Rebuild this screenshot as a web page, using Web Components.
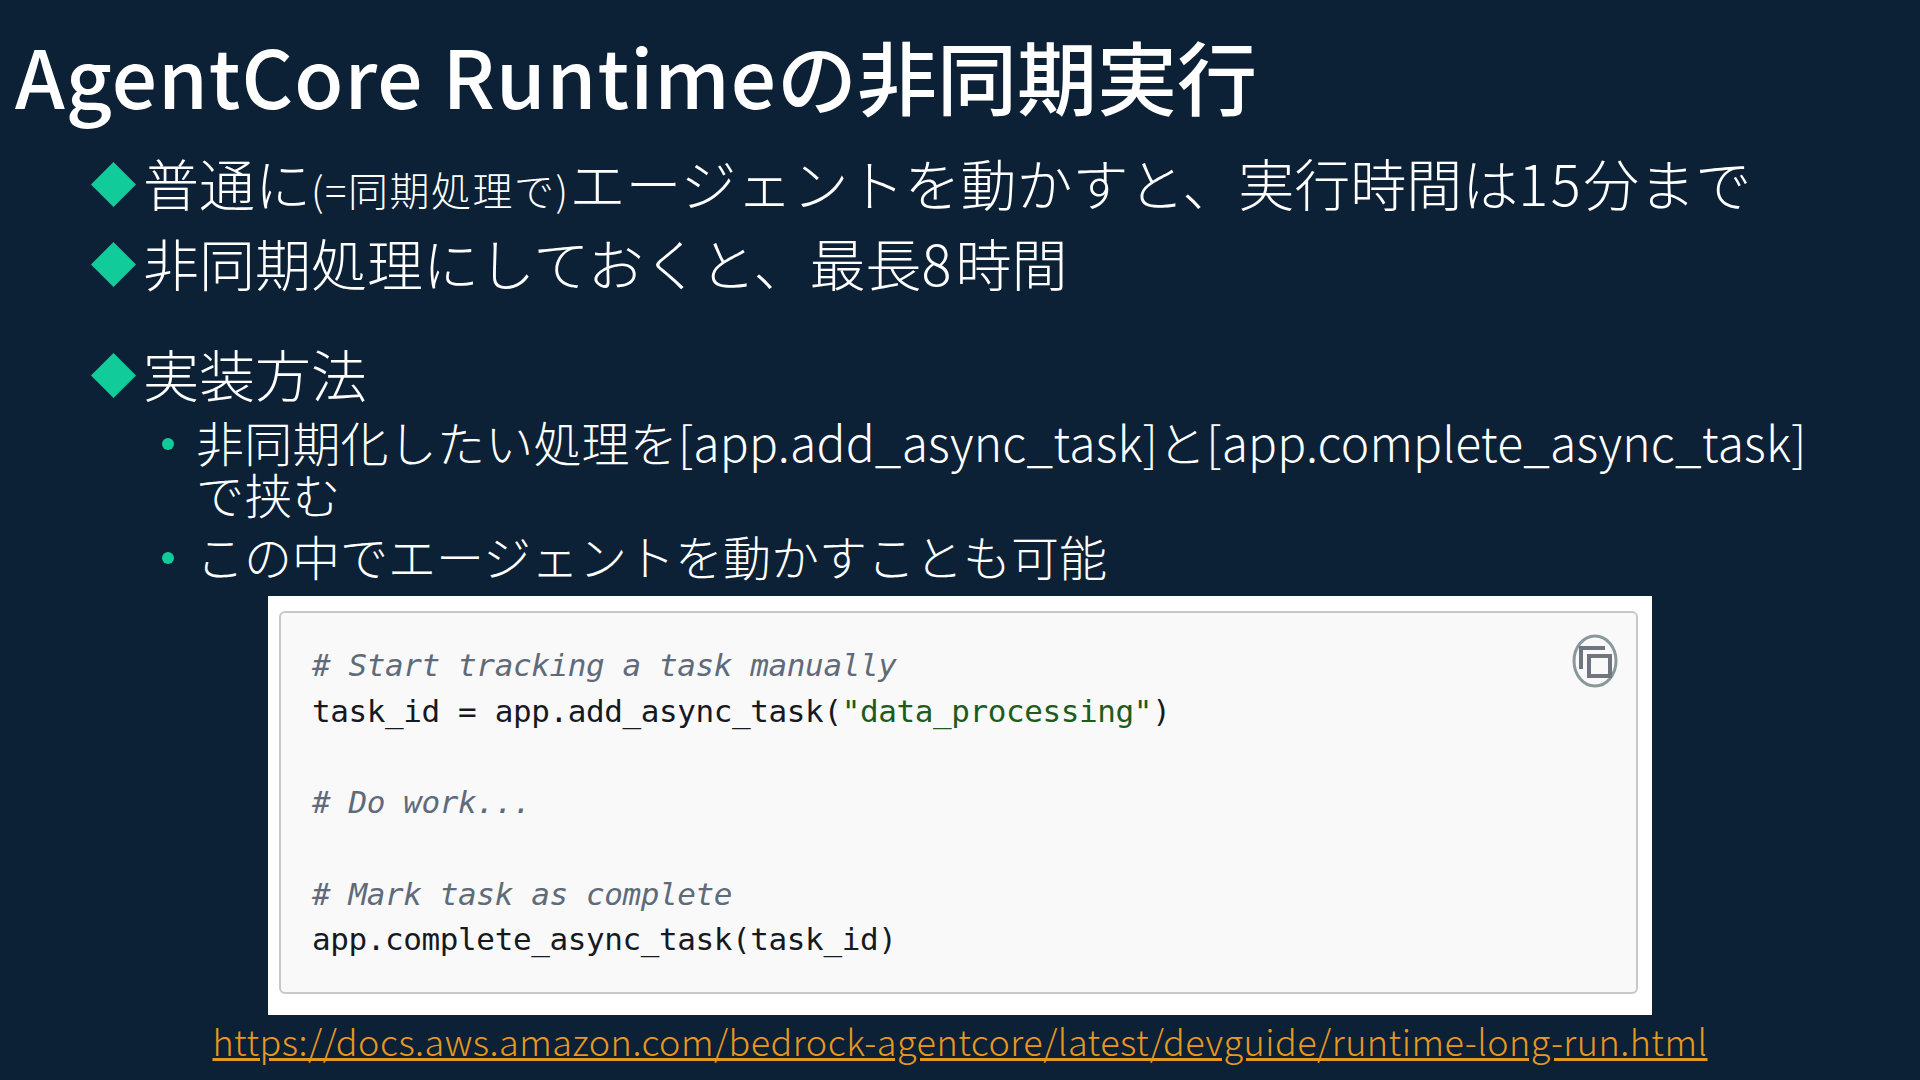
<!DOCTYPE html>
<html lang="ja"><head><meta charset="utf-8"><style>
html,body{margin:0;height:100%;background:#0c2036}
body{width:1920px;height:1080px;overflow:hidden;font-family:"Noto Sans CJK JP","Noto Sans",sans-serif}
</style></head><body>
<slide-page>
  <span slot="title"><span style="letter-spacing:1px">AgentCore Runtime</span>の非同期実行</span>
  <big-item>普通に<span style="font-size:40px;line-height:1;letter-spacing:1.5px">(=同期処理で)</span>エージェントを動かすと、実行時間は<span style="letter-spacing:2.5px">15</span>分まで</big-item>
  <big-item>非同期処理にしておくと、最長<span style="letter-spacing:4px">8</span>時間</big-item>
  <big-item style="margin-top:31px">実装方法</big-item>
  <sub-item style="margin-top:2px;letter-spacing:.2px">非同期化したい処理を[app.add_async_task]と[app.complete_async_task]で挟む</sub-item>
  <sub-item>この中でエージェントを動かすことも可能</sub-item>
  <code-shot style="margin-top:5px"></code-shot>
  <a slot="link">https://docs.aws.amazon.com/bedrock-agentcore/latest/devguide/runtime-long-run.html</a>
</slide-page>
<script>
class SlidePage extends HTMLElement{constructor(){super();this.attachShadow({mode:"open"}).innerHTML=`<style>
:host{display:flex;flex-direction:column;width:1920px;height:1080px;box-sizing:border-box;color:#fff}
h1{margin:0;padding:26px 0 0 15px;font-size:80px;line-height:96px;font-weight:500;white-space:nowrap}
.b{padding:20px 0 0 91px;display:flex;flex-direction:column}
.l{display:block;text-align:center;font-size:36px;line-height:46px;font-weight:300;letter-spacing:.47px;padding-top:2px;color:#e8981f;text-decoration:underline}
</style><h1><slot name="title"></slot></h1><div class="b"><slot></slot></div><div class="l"><slot name="link"></slot></div>`}}
class BigItem extends HTMLElement{constructor(){super();this.attachShadow({mode:"open"}).innerHTML=`<style>
:host{display:flex;font-size:56px;line-height:80px;font-weight:300;white-space:nowrap}
i{width:45px;height:45px;margin:20px 7px 0 0;flex:none;background:#12cb9a;clip-path:polygon(50% 0,100% 50%,50% 100%,0 50%)}
</style><i></i><div><slot></slot></div>`}}
class SubItem extends HTMLElement{constructor(){super();this.attachShadow({mode:"open"}).innerHTML=`<style>
:host{display:flex;font-size:48px;line-height:52px;font-weight:300;padding-left:71px;width:1740px;box-sizing:border-box;margin-bottom:10px}
i{width:12px;height:12px;border-radius:50%;background:#12cb9a;margin:23px 22px 0 0;flex:none}
</style><i></i><div><slot></slot></div>`}}
class CodeShot extends HTMLElement{constructor(){super();this.attachShadow({mode:"open"}).innerHTML=`<style>
:host{display:block;width:1384px;height:419px;margin-left:177px;background:#fff;padding:15px 14px 21px 11px;box-sizing:border-box;color:#16191f}
.c{position:relative;height:100%;box-sizing:border-box;background:#f9f9f9;border:2px solid #c8c8c8;border-radius:6px;padding:30px 31px;font:31px/45.7px "DejaVu Sans Mono",monospace;letter-spacing:-.4px;white-space:pre}
em{color:#5f6b7a}b{font-weight:400;color:#1d5c1d}
svg{position:absolute;right:18px;top:21px}
</style><div class="c"><em># Start tracking a task manually</em>
task_id = app.add_async_task(<b>"data_processing"</b>)

<em># Do work...</em>

<em># Mark task as complete</em>
app.complete_async_task(task_id)<svg width="46" height="54" viewBox="0 0 46 54" fill="none"><ellipse cx="23" cy="27" rx="21" ry="25" stroke="#8a9899" stroke-width="3"/><path d="M9 35V14h24M17 22h21v20H17z" stroke="#6f7680" stroke-width="4"/></svg></div>`}}
customElements.define("slide-page",SlidePage);customElements.define("big-item",BigItem);customElements.define("sub-item",SubItem);customElements.define("code-shot",CodeShot);
</script></body></html>
